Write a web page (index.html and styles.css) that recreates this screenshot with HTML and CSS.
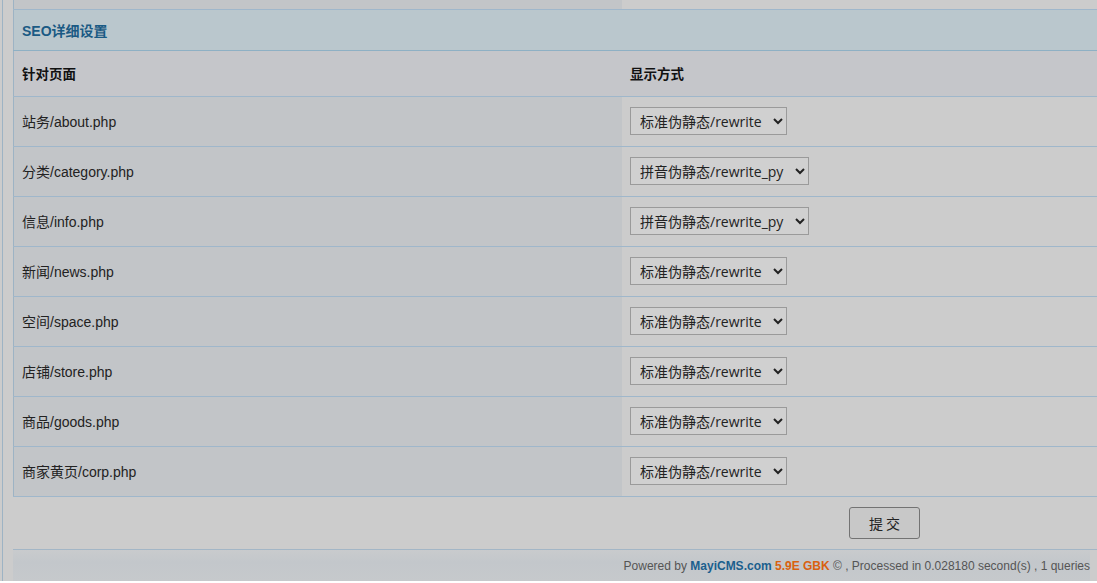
FILE: index.html
```html
<!DOCTYPE html>
<html>
<head>
<meta charset="utf-8">
<link rel="stylesheet" href="styles.css">
</head>
<body>
<div class="frame">
  <div class="main">
    <table class="tb">
      <tr class="prev"><td class="c1"></td><td class="c2"></td></tr>
      <tr class="title"><td colspan="2">SEO详细设置</td></tr>
      <tr class="head"><td class="c1">针对页面</td><td class="c2">显示方式</td></tr>
      <tr><td class="c1">站务/about.php</td><td class="c2"><select class="sel"><option>标准伪静态/rewrite</option></select></td></tr>
      <tr><td class="c1">分类/category.php</td><td class="c2"><select class="sel"><option>拼音伪静态/rewrite_py</option></select></td></tr>
      <tr><td class="c1">信息/info.php</td><td class="c2"><select class="sel"><option>拼音伪静态/rewrite_py</option></select></td></tr>
      <tr><td class="c1">新闻/news.php</td><td class="c2"><select class="sel"><option>标准伪静态/rewrite</option></select></td></tr>
      <tr><td class="c1">空间/space.php</td><td class="c2"><select class="sel"><option>标准伪静态/rewrite</option></select></td></tr>
      <tr><td class="c1">店铺/store.php</td><td class="c2"><select class="sel"><option>标准伪静态/rewrite</option></select></td></tr>
      <tr><td class="c1">商品/goods.php</td><td class="c2"><select class="sel"><option>标准伪静态/rewrite</option></select></td></tr>
      <tr><td class="c1">商家黄页/corp.php</td><td class="c2"><select class="sel"><option>标准伪静态/rewrite</option></select></td></tr>
    </table>
    <div class="actions"><button class="btn">提 交</button></div>
    <div class="footer">Powered by <b class="brand">MayiCMS.com</b> <b class="ver">5.9E GBK</b> © , Processed in 0.028180 second(s) , 1 queries</div>
  </div>
</div>
</body>
</html>
```
FILE: styles.css
```css
html, body {
  margin: 0;
  padding: 0;
  background: #ffffff;
  overflow: hidden;
}
body {
  font-family: "Liberation Sans", Arial, "Noto Sans CJK SC", sans-serif;
  font-size: 14px;
  color: #222;
}
.frame {
  height: 581px;
  background: #cccccc;
  padding-left: 2px;
  overflow: hidden;
}
.main {
  height: 581px;
  border-left: 1px solid #9db3c4;
  padding-left: 10px;
  overflow: hidden;
}
.tb {
  width: 1200px;
  border-collapse: collapse;
  border-left: 1px solid #9db3c4;
}
.tb td {
  border-bottom: 1px solid #9fb7cb;
  padding: 0 0 1px 8px;
  height: 48px;
  vertical-align: middle;
  font-size: 14px;
}
.tb .c1 {
  width: 600px;
  background: #c2c5c8;
}
.tb .c2 {
  background: #cccccc;
}
.tb tr.prev td {
  height: 9px;
  padding: 0;
}
.tb tr.title td {
  height: 39px;
  background: #bac7cd;
  color: #1a5a84;
  font-weight: bold;
  font-size: 14px;
  border-bottom: 1px solid #8eb0c4;
}
.tb tr.head td {
  height: 44px;
  background: #c5c6ca;
  color: #111;
  font-weight: bold;
  font-size: 13.5px;
}
.sel {
  font-family: "Open Sans", "Noto Sans CJK SC", sans-serif;
  font-size: 14px;
  color: #222;
  height: 28px;
  background: #d0d0d0;
  border: 1px solid #9a9a9a;
  border-radius: 0;
  padding: 0 8px 0 5px;
}
.actions {
  height: 52px;
  border-bottom: 1px solid #a3b6c6;
  display: flex;
  align-items: flex-start;
  padding-left: 836px;
}
.btn {
  margin-top: 10px;
  width: 71px;
  height: 32px;
  background: #c8c8c8;
  border: 1px solid #737373;
  border-radius: 3px;
  font-family: "Noto Sans CJK SC", sans-serif;
  font-size: 14px;
  color: #222;
  padding: 0;
}
.footer {
  height: 31px;
  background: linear-gradient(#c9cbcd, #c3c7cb 40%, #c6c9cc);
  text-align: right;
  line-height: 32px;
  font-size: 12px;
  color: #555;
  width: 1077px;
  padding-right: 0;
  box-sizing: border-box;
}
.brand { color: #1b5f8e; }
.ver { color: #d9610f; }
```
